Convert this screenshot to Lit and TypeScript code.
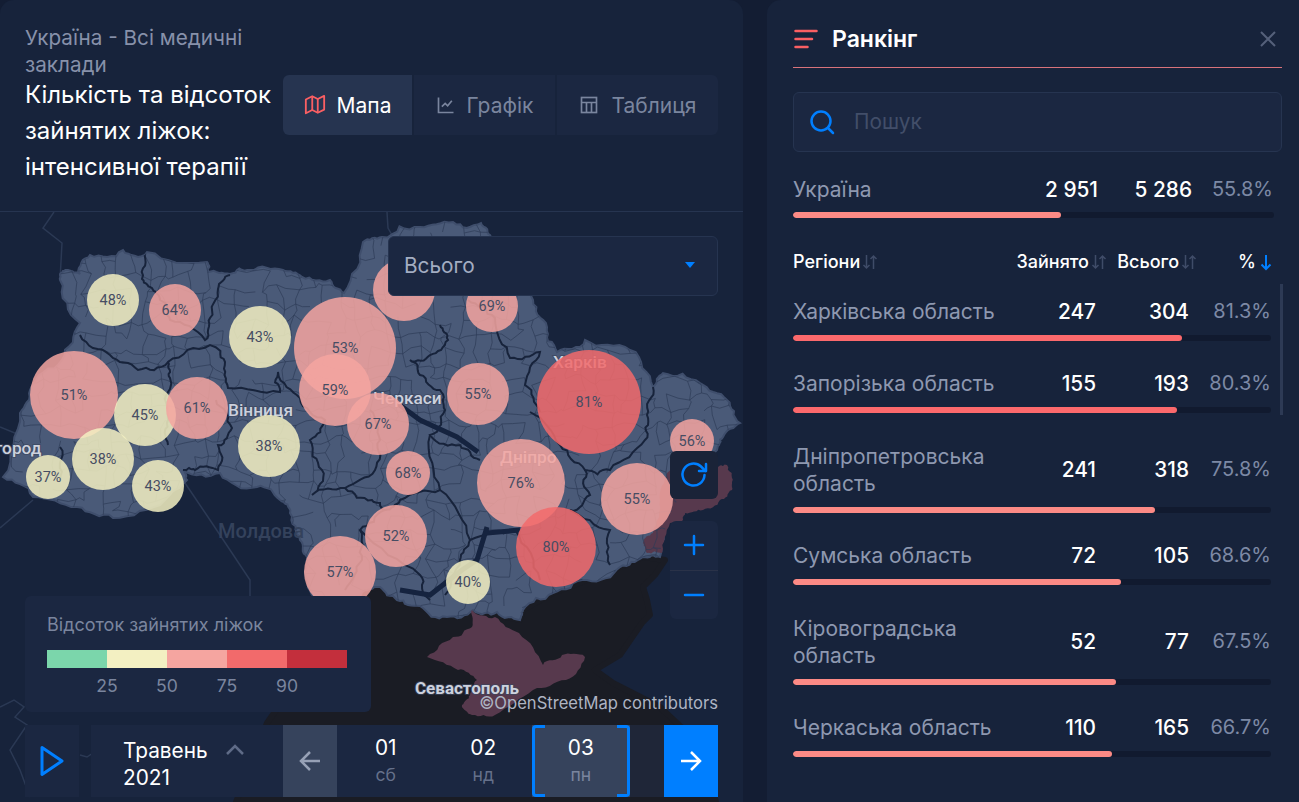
import { LitElement, html, css, svg } from 'lit';
import { customElement } from 'lit/decorators.js';

interface Bubble {
  x: number;
  y: number;
  r: number;
  pct: number;
}

interface Region {
  name: string;
  used: number;
  total: number;
  pct: string;
}

const YELLOW = 'rgba(243,240,194,.85)';
const PINK = 'rgba(245,165,160,.85)';
const RED = 'rgba(242,106,107,.85)';

const bubbles: Bubble[] = [
  { x: 404, y: 290, r: 31, pct: 70 },
  { x: 113, y: 300, r: 26, pct: 48 },
  { x: 175, y: 310, r: 26, pct: 64 },
  { x: 260, y: 337, r: 31, pct: 43 },
  { x: 345, y: 348, r: 51, pct: 53 },
  { x: 335, y: 390, r: 36, pct: 59 },
  { x: 74, y: 395, r: 44, pct: 51 },
  { x: 145, y: 415, r: 31, pct: 45 },
  { x: 197, y: 408, r: 31, pct: 61 },
  { x: 269, y: 446, r: 31, pct: 38 },
  { x: 103, y: 459, r: 31, pct: 38 },
  { x: 48, y: 477, r: 22, pct: 37 },
  { x: 158, y: 486, r: 26, pct: 43 },
  { x: 340, y: 572, r: 36, pct: 57 },
  { x: 492, y: 306, r: 26, pct: 69 },
  { x: 478, y: 394, r: 31, pct: 55 },
  { x: 589, y: 402, r: 52, pct: 81 },
  { x: 692, y: 441, r: 22, pct: 56 },
  { x: 521, y: 483, r: 44, pct: 76 },
  { x: 556, y: 547, r: 40, pct: 80 },
  { x: 637, y: 499, r: 36, pct: 55 },
  { x: 408, y: 473, r: 22, pct: 68 },
  { x: 396, y: 536, r: 31, pct: 52 },
  { x: 468, y: 582, r: 22, pct: 40 },
  { x: 378, y: 424, r: 31, pct: 67 },
];

const regions: Region[] = [
  { name: 'Харківська область', used: 247, total: 304, pct: '81.3' },
  { name: 'Запорізька область', used: 155, total: 193, pct: '80.3' },
  { name: 'Дніпропетровська область', used: 241, total: 318, pct: '75.8' },
  { name: 'Сумська область', used: 72, total: 105, pct: '68.6' },
  { name: 'Кіровоградська область', used: 52, total: 77, pct: '67.5' },
  { name: 'Черкаська область', used: 110, total: 165, pct: '66.7' },
];

const LAND_RAW =
  'M60 275 L68 270 L80 274 L90 255 L123 250 L147 252 L207 262 L208 272 L230 274 L250 270 L283 270 L302 277 L330 280 L344 293 L363 242 L382 237 L420 227 L453 222 L481 223 L491 237 L520 270 L533 300 L547 327 L557 352 L585 340 L630 350 L653 387 L663 373 L700 383 L727 400 L740 423 L723 437 L717 450 L690 470 L672 510 L660 557 L643 557 L620 567 L587 580 L553 593 L523 610 L520 620 L497 612 L473 610 L447 617 L420 606 L397 600 L380 587 L365 590 L345 612 L318 598 L305 573 L307 557 L300 540 L290 513 L280 500 L257 487 L220 473 L183 470 L187 480 L165 500 L113 518 L77 507 L33 497 L3 477 L20 413 L30 390 L62 360 L80 323 L60 280 Z';
const OCCUPIED_RAW =
  'M667 473 L690 458 L718 467 L727 465 L732 482 L732 490 L720 500 L703 510 L685 513 L683 520 L670 523 L662 553 L647 553 L643 543 L653 533 L660 500 Z';
const CRIMEA_RAW =
  'M472 610 L495 617 L519 633 L543 665 L562 655 L585 657 L566 680 L533 690 L495 715 L472 715 L462 705 L470 695 L477 680 L458 670 L427 657 L453 637 L472 627 Z';
const SEA =
  'M236 802 L267 723 L290 690 L320 640 L345 612 L365 590 L380 587 L397 600 L447 617 L473 610 L520 620 L523 610 L553 593 L587 580 L620 567 L643 557 L665 560 L655 575 L643 587 L647 600 L650 615 L642 623 L620 655 L595 670 L613 683 L660 707 L700 745 L716 802 Z';

// hand traced oblast borders, they only need to read as thick dark lines
const OBLAST_RAW = [
  'M145 252 L142 279 L153 290 L160 300 L170 320 L205 340 L210 318 L218 289 L230 275',
  'M80 335 L110 355 L138 370 L168 362 L170 378 L168 420 L168 445',
  'M60 447 L60 480 M168 362 L210 345 L225 362 L228 388 L280 392 L278 372 L300 398',
  'M216 400 L232 428 L218 445 L218 470 L195 470 L183 470',
  'M300 398 L325 420 L310 440 L322 470 L312 495 L345 488 L372 500 L385 510 L360 530 L362 560 L345 590',
  'M345 488 L375 470 L380 440 L370 410',
  'M440 325 L448 340 L430 355 L410 360 L420 375 L440 390 L445 410 L430 435 L460 445 L480 460',
  'M468 300 L495 318 L510 358 L540 352 L525 385 L540 412',
  'M530 412 L560 445 L585 470 L610 470 L645 440 L647 415 L653 387',
  'M585 470 L590 495 L570 510 L610 530 L610 565',
  'M430 435 L440 490 L470 540 L460 560 L445 595',
  'M470 540 L515 530 L540 580',
  'M385 510 L400 500 L440 490',
  'M360 530 L420 575 L430 600',
];
const RIVER = [
  'M397 403 L420 420 L457 437 L478 452',
  'M487 533 L520 530 M487 527 L477 560 L462 570 L430 595 L400 590',
];

// small seeded generator so the mesh and coastlines do not change between runs
let seed = 1297;
const rnd = () => {
  seed = (seed * 16807) % 2147483647;
  return seed / 2147483647;
};

type Pt = [number, number];

// midpoint displacement, turns straight traced edges into rough borders
function roughen(d: string, amp: number, depth = 3): string {
  return d
    .split('M')
    .filter(s => s.trim())
    .map(sub => {
      const nums = sub.match(/-?[\d.]+/g)!.map(Number);
      const pts: Pt[] = [];
      for (let i = 0; i < nums.length; i += 2) pts.push([nums[i], nums[i + 1]]);
      const closed = sub.includes('Z');
      if (closed) pts.push(pts[0]);
      let cur = pts;
      let a = amp;
      for (let k = 0; k < depth; k++) {
        const next: Pt[] = [cur[0]];
        for (let i = 1; i < cur.length; i++) {
          const p = cur[i - 1];
          const q = cur[i];
          const dx = q[0] - p[0];
          const dy = q[1] - p[1];
          const len = Math.hypot(dx, dy) || 1;
          const off = (rnd() - 0.5) * Math.min(a, len * 0.4);
          next.push([(p[0] + q[0]) / 2 - (dy / len) * off, (p[1] + q[1]) / 2 + (dx / len) * off]);
          next.push(q);
        }
        cur = next;
        a *= 0.6;
      }
      return 'M' + cur.map(p => `${p[0].toFixed(1)} ${p[1].toFixed(1)}`).join('L') + (closed ? 'Z' : '');
    })
    .join('');
}

function meshPath(): string {
  const step = 15;
  const pts: Pt[][] = [];
  for (let i = 0; i < 52; i++) {
    const col: Pt[] = [];
    for (let j = 0; j < 30; j++) {
      col.push([i * step - 4 + rnd() * 11 - 5.5, 215 + j * step + rnd() * 11 - 5.5]);
    }
    pts.push(col);
  }
  const wiggle = (a: Pt, b: Pt) => {
    const mx = (a[0] + b[0]) / 2 + rnd() * 6 - 3;
    const my = (a[1] + b[1]) / 2 + rnd() * 6 - 3;
    return `M${a[0].toFixed(1)} ${a[1].toFixed(1)}L${mx.toFixed(1)} ${my.toFixed(1)}L${b[0].toFixed(1)} ${b[1].toFixed(1)}`;
  };
  let d = '';
  for (let i = 0; i < 51; i++) {
    for (let j = 0; j < 29; j++) {
      if (rnd() > 0.3) d += wiggle(pts[i][j], pts[i + 1][j]);
      if (rnd() > 0.3) d += wiggle(pts[i][j], pts[i][j + 1]);
    }
  }
  return d;
}

const LAND = roughen(LAND_RAW, 12);
const OCCUPIED = roughen(OCCUPIED_RAW, 6);
const CRIMEA = roughen(CRIMEA_RAW, 6);
const OBLAST = OBLAST_RAW.map(d => roughen(d, 9));
const MESH = meshPath();

const sortIcon = (active = false) =>
  active
    ? html`<svg width="12" height="18" viewBox="2 0 12 18" fill="none" stroke="#007fff" stroke-width="2">
        <path d="M8 2v14M3.500 11.500 8 16l4.500-4.500" />
      </svg>`
    : html`<svg width="16" height="18" viewBox="0 0 16 18" fill="none" stroke="#3f4c68" stroke-width="1.500">
        <path d="M4.500 2v13M1.500 12l3 3 3-3M11.500 16V3M8.500 6l3-3 3 3" />
      </svg>`;

@customElement('app-root')
export class AppRoot extends LitElement {
  static styles = css`
    :host {
      display: block;
      width: 1299px;
      height: 802px;
      overflow: hidden;
      background: #131d33;
      font-family: Inter, 'Noto Sans', sans-serif;
      color: #fff;
    }

    .page {
      display: flex;
      gap: 24px;
      height: 802px;
    }

    .left {
      width: 743px;
      flex: none;
      display: flex;
      flex-direction: column;
      background: #17233b;
      border-radius: 14px 14px 0 0;
      overflow: hidden;
    }

    .head {
      height: 212px;
      box-sizing: border-box;
      flex: none;
      display: flex;
      padding: 24px 25px 0;
      border-bottom: 1px solid #263450;
    }

    .head-text {
      width: 258px;
      flex: none;
    }

    .crumb {
      font-size: 20.700px;
      line-height: 27px;
      color: #8791aa;
      width: 230px;
    }

    .title {
      font-size: 24px;
      line-height: 36px;
      margin-top: -1px;
    }

    .tabs {
      display: flex;
      gap: 2px;
      height: 60px;
      margin-top: 51px;
      width: 435px;
      border-radius: 6px;
      overflow: hidden;
    }

    .tab {
      display: flex;
      align-items: center;
      justify-content: center;
      gap: 11px;
      background: #1b2741;
      color: #7a859e;
      font-size: 21px;
    }

    .tab:nth-child(1) {
      width: 129px;
    }

    .tab:nth-child(2) {
      width: 141px;
    }

    .tab:nth-child(3) {
      width: 161px;
      gap: 13px;
    }

    .tab.on {
      background: #263450;
      color: #fff;
    }

    .map {
      position: relative;
      flex: 1;
      overflow: hidden;
    }

    .map > svg {
      display: block;
    }

    .city {
      font-family: Roboto, sans-serif;
      font-size: 17.300px;
      font-weight: 500;
      fill: #ccd1dd;
      paint-order: stroke;
      stroke: rgba(60, 70, 95, 0.7);
      stroke-width: 2px;
    }

    .city.capital {
      font-size: 17px;
      font-weight: 700;
    }

    .country {
      font-family: Roboto, sans-serif;
      font-size: 20px;
      font-weight: 500;
      fill: #34425c;
    }

    .bubble-label {
      font-family: Roboto, sans-serif;
      font-size: 14.500px;
      font-weight: 400;
      fill: #474d63;
      text-anchor: middle;
      dominant-baseline: central;
    }

    .select {
      position: absolute;
      left: 388px;
      top: 24px;
      width: 330px;
      height: 60px;
      box-sizing: border-box;
      display: flex;
      align-items: center;
      justify-content: space-between;
      padding: 0 22px 2px 15px;
      background: #1b2741;
      border: 1px solid #263450;
      border-radius: 6px;
      font-size: 20.800px;
      color: #a3adc2;
    }

    .caret {
      width: 0;
      height: 0;
      border: 5px solid transparent;
      border-top: 6px solid #007fff;
      border-bottom: 0;
    }

    .ctrl {
      position: absolute;
      left: 670px;
      width: 48px;
      background: #1b2741;
      border-radius: 6px;
    }

    .ctrl.reload {
      top: 239px;
      height: 48px;
      background: #1a2338;
      display: flex;
      align-items: center;
      justify-content: center;
    }

    .ctrl.zoom {
      top: 309px;
      height: 98px;
      display: flex;
      flex-direction: column;
    }

    .ctrl.zoom div {
      flex: 1;
      display: flex;
      align-items: center;
      justify-content: center;
    }

    .ctrl.zoom div + div {
      border-top: 1px solid #2a3248;
    }

    .legend {
      position: absolute;
      left: 25px;
      top: 384px;
      width: 346px;
      height: 116px;
      box-sizing: border-box;
      padding: 19px 22px;
      background: #1b2741;
      border-radius: 6px;
      color: #7a859e;
      font-size: 17.600px;
    }

    .legend-title {
      font-size: 18px;
      line-height: 20px;
    }

    .scale {
      display: flex;
      width: 300px;
      height: 18px;
      margin-top: 15px;
    }

    .scale i {
      flex: 1;
    }

    .ticks {
      display: flex;
      justify-content: space-between;
      width: 180px;
      margin: 8px 0 0 60px;
      line-height: 20px;
    }

    .ticks span {
      width: 0;
      display: flex;
      justify-content: center;
    }

    .attr {
      position: absolute;
      right: 25px;
      top: 481px;
      font-size: 16.600px;
      line-height: 20px;
      color: #aeb4c3;
    }

    .time {
      position: absolute;
      left: 25px;
      top: 513px;
      width: 693px;
      height: 72px;
      display: flex;
    }

    .play {
      width: 54px;
      margin-right: 12px;
      background: #1b2741;
      display: flex;
      align-items: center;
      justify-content: center;
    }

    .month {
      width: 192px;
      box-sizing: border-box;
      padding: 12px 0 0 32px;
      background: #1b2741;
      display: flex;
      gap: 15px;
      font-size: 20.800px;
      line-height: 27px;
    }

    .month-name {
      width: 87px;
    }

    .chev {
      margin-top: 6px;
    }

    .arrow {
      width: 54px;
      display: flex;
      align-items: center;
      justify-content: center;
      flex: none;
      background: #36435c;
    }

    .arrow.next {
      background: #007fff;
    }

    .days {
      flex: 1;
      display: flex;
      background: #1f2638;
    }

    .day {
      position: relative;
      width: 97.500px;
      background: #1b2741;
      display: flex;
      flex-direction: column;
      align-items: center;
      padding-top: 11px;
      box-sizing: border-box;
      font-size: 20.800px;
      line-height: 24px;
    }

    .day small {
      font-size: 17.600px;
      line-height: 20px;
      margin-top: 5px;
      color: #65708a;
    }

    .day.on {
      background: #36435c;
    }

    .day.on small {
      color: #7a859e;
    }

    .day.on::before,
    .day.on::after {
      content: '';
      position: absolute;
      top: 0;
      bottom: 0;
      width: 10px;
      border: 3px solid #007fff;
    }

    .day.on::before {
      left: 0;
      border-right: 0;
      border-radius: 4px 0 0 4px;
    }

    .day.on::after {
      right: 0;
      border-left: 0;
      border-radius: 0 4px 4px 0;
    }

    .right {
      flex: 1;
      box-sizing: border-box;
      padding: 0 17px 0 26px;
      background: #17233b;
      border-radius: 14px 0 0 0;
    }

    .rank-head {
      height: 68px;
      box-sizing: border-box;
      display: flex;
      align-items: center;
      padding: 10px 5px 0 1px;
      border-bottom: 1px solid #d9737b;
      font-size: 23px;
      font-weight: 600;
    }

    .rank-head span {
      flex: 1;
      margin-left: 14px;
    }

    .search {
      height: 60px;
      box-sizing: border-box;
      margin-top: 24px;
      display: flex;
      align-items: center;
      gap: 19px;
      padding: 0 0 1px 15px;
      background: #1b2741;
      border: 1px solid #263450;
      border-radius: 6px;
      font-size: 20.800px;
      color: #424e69;
    }

    .total {
      display: grid;
      grid-template-columns: 205px 100px 94px 81px;
      width: 480px;
      margin-top: 24px;
      font-size: 20.800px;
      line-height: 27px;
    }

    .total .name,
    .row .name {
      color: #8e98b0;
      font-size: 21px;
    }

    .num {
      text-align: right;
      font-weight: 500;
    }

    .pct {
      text-align: right;
      font-size: 20px;
      color: #7d89a5;
    }

    .track {
      height: 6px;
      border-radius: 3px;
      background: #111a2f;
      overflow: hidden;
    }

    .track i {
      display: block;
      height: 100%;
      border-radius: 3px;
      background: #fc8a85;
    }

    .track i.hot {
      background: #fb696c;
    }

    .total-bar {
      width: 481px;
      margin-top: 9px;
    }

    .thead {
      display: grid;
      grid-template-columns: 214px 100px 90px 75px;
      width: 479px;
      margin-top: 34px;
      font-size: 18px;
      font-weight: 500;
      line-height: 20px;
    }

    .thead div {
      display: flex;
      align-items: center;
      justify-content: flex-end;
      gap: 2px;
    }

    .thead div:last-child {
      gap: 4px;
    }

    .thead div:first-child {
      justify-content: flex-start;
    }

    .list {
      position: relative;
      margin-top: 26px;
    }

    .thumb {
      position: absolute;
      left: 487px;
      top: -14px;
      width: 3px;
      height: 131px;
      background: #2d3a55;
    }

    .row {
      width: 478px;
      margin-bottom: 29.400px;
    }

    .cells {
      display: grid;
      grid-template-columns: 230px 73px 93px 82px;
      align-items: center;
      font-size: 20.800px;
      line-height: 27px;
    }

    .row .track {
      margin-top: 10px;
    }
  `;

  private renderMap() {
    return html`<svg width="743" height="590" viewBox="0 212 743 590" xmlns="http://www.w3.org/2000/svg">
      <defs>
        <clipPath id="land"><path d=${LAND} /></clipPath>
      </defs>
      <g fill="none" stroke="#2b3954" stroke-width="1.500">
        <path d="M54 212 L43 228 L62 243 L60 280" />
        <path d="M387 212 L388 228 L396 242" />
        <path d="M185 483 L210 520 L250 580 L250 597" />
        <path d="M0 427 L27 438 M33 500 L0 528" />
        <path d="M0 707 L14 700 L24 707 L15 717 L27 725 L10 750 L20 770 L30 797 M80 755 L87 757 L93 753" />
      </g>
      <path d=${SEA} fill="#1a1c24" stroke="#1a1c24" stroke-width="6" stroke-linejoin="round" />
      <path d=${LAND} fill="#4a5a78" stroke="#3f4e6c" stroke-width="2" />
      <path d=${CRIMEA} fill="#57394d" />
      <path d=${OCCUPIED} fill="#57394d" />
      <g clip-path="url(#land)" fill="none">
        <path d=${MESH} stroke="#2e3c58" stroke-width=".7" />
        ${OBLAST.map(d => svg`<path d=${d} stroke="#17233b" stroke-width="2" />`)}
        ${RIVER.map(d => svg`<path d=${d} stroke="#15233f" stroke-width="5" />`)}
      </g>
      <text class="city" x="228" y="416">Вінниця</text>
      <text class="city" x="373" y="404">Черкаси</text>
      <text class="city" x="553" y="368">Харків</text>
      <text class="city" x="500" y="463">Дніпро</text>
      <text class="city" x="-5" y="454">город</text>
      <text class="country" x="218" y="538">Молдова</text>
      <text class="city capital" x="415" y="694">Севастополь</text>
      ${bubbles.map(b => {
        const fill = b.pct < 50 ? YELLOW : b.pct < 78 ? PINK : RED;
        return svg`<circle cx=${b.x} cy=${b.y} r=${b.r} fill=${fill} />
          <text class="bubble-label" x=${b.x} y=${b.y}>${b.pct}%</text>`;
      })}
    </svg>`;
  }

  render() {
    return html`<div class="page">
      <section class="left">
        <header class="head">
          <div class="head-text">
            <div class="crumb">Україна - Всі медичні заклади</div>
            <div class="title">Кількість та відсоток зайнятих ліжок: інтенсивної терапії</div>
          </div>
          <nav class="tabs">
            <div class="tab on">
              <svg width="22" height="22" viewBox="0 0 24 24" fill="none" stroke="#fa5f63" stroke-width="2" stroke-linejoin="round">
                <path d="M2 6v15l7-3.500 6 3 7-3.500V2l-7 3.500-6-3z" />
                <path d="M9 2.500v15M15 5.500v15" />
              </svg>
              Мапа
            </div>
            <div class="tab">
              <svg width="20" height="20" viewBox="0 0 24 24" fill="none" stroke="#7a859e" stroke-width="2">
                <path d="M3 3v18h18" />
                <path d="M7 14l4-4 3 3 5-6" />
              </svg>
              Графік
            </div>
            <div class="tab">
              <svg width="20" height="20" viewBox="0 0 24 24" fill="none" stroke="#7a859e" stroke-width="2">
                <rect x="3" y="3" width="18" height="18" />
                <path d="M3 9h18M9 9v12M15 9v12" />
              </svg>
              Таблиця
            </div>
          </nav>
        </header>
        <div class="map">
          ${this.renderMap()}
          <div class="select">Всього <span class="caret"></span></div>
          <div class="ctrl reload">
            <svg width="30" height="30" viewBox="0 0 30 30" fill="none" stroke="#007fff" stroke-width="2.500" stroke-linecap="round" stroke-linejoin="round">
              <path d="M25.500 15A11 11 0 1 1 22 6.500L26.500 11" />
              <path d="M27 4v7h-7" />
            </svg>
          </div>
          <div class="ctrl zoom">
            <div>
              <svg width="22" height="22" viewBox="0 0 22 22" stroke="#007fff" stroke-width="2.500" stroke-linecap="round">
                <path d="M11 2v18M2 11h18" />
              </svg>
            </div>
            <div>
              <svg width="22" height="22" viewBox="0 0 22 22" stroke="#007fff" stroke-width="2.500" stroke-linecap="round">
                <path d="M2 11h18" />
              </svg>
            </div>
          </div>
          <div class="legend">
            <div class="legend-title">Відсоток зайнятих ліжок</div>
            <div class="scale">
              ${['#7bd6ab', '#f3f0c2', '#f5a5a0', '#f26a6b', '#c32f3c'].map(c => html`<i style="background:${c}"></i>`)}
            </div>
            <div class="ticks">
              ${[25, 50, 75, 90].map(t => html`<span>${t}</span>`)}
            </div>
          </div>
          <div class="attr">©OpenStreetMap contributors</div>
          <div class="time">
            <div class="play">
              <svg width="26" height="32" viewBox="0 0 26 32" fill="none" stroke="#007fff" stroke-width="3" stroke-linejoin="round">
                <path d="M3 2.500 23 16 3 29.500z" />
              </svg>
            </div>
            <div class="month">
              <div class="month-name">Травень 2021</div>
              <svg class="chev" width="20" height="14" viewBox="0 0 20 14" fill="none" stroke="#5f6b87" stroke-width="2.500">
                <path d="M2 11l8-8 8 8" />
              </svg>
            </div>
            <div class="arrow">
              <svg width="24" height="24" viewBox="0 0 24 24" fill="none" stroke="#97a1b6" stroke-width="2.500">
                <path d="M22 12H3M12 3l-9 9 9 9" />
              </svg>
            </div>
            <div class="days">
              <div class="day">01<small>сб</small></div>
              <div class="day">02<small>нд</small></div>
              <div class="day on">03<small>пн</small></div>
            </div>
            <div class="arrow next">
              <svg width="24" height="24" viewBox="0 0 24 24" fill="none" stroke="#fff" stroke-width="2.500">
                <path d="M2 12h19M12 3l9 9-9 9" />
              </svg>
            </div>
          </div>
        </div>
      </section>
      <aside class="right">
        <div class="rank-head">
          <svg width="24" height="20" viewBox="0 0 24 20" stroke="#fa5f63" stroke-width="2.500" stroke-linecap="round">
            <path d="M1.500 2h21M1.500 10h16.500M1.500 18h12" />
          </svg>
          <span>Ранкінг</span>
          <svg width="18" height="18" viewBox="0 0 18 18" stroke="#55607a" stroke-width="2">
            <path d="M2 2l14 14M16 2 2 16" />
          </svg>
        </div>
        <div class="search">
          <svg width="26" height="26" viewBox="0 0 26 26" fill="none" stroke="#007fff" stroke-width="2.500" stroke-linecap="round">
            <circle cx="12" cy="12" r="9.500" />
            <path d="M19.500 19.500 24 24" />
          </svg>
          Пошук
        </div>
        <div class="total">
          <div class="name">Україна</div>
          <div class="num">2 951</div>
          <div class="num">5 286</div>
          <div class="pct">55.8%</div>
        </div>
        <div class="track total-bar"><i style="width:55.800%"></i></div>
        <div class="thead">
          <div>Регіони ${sortIcon()}</div>
          <div>Зайнято ${sortIcon()}</div>
          <div>Всього ${sortIcon()}</div>
          <div>% ${sortIcon(true)}</div>
        </div>
        <div class="list">
          <div class="thumb"></div>
          ${regions.map(
            r => html`<div class="row">
              <div class="cells">
                <div class="name">${r.name}</div>
                <div class="num">${r.used}</div>
                <div class="num">${r.total}</div>
                <div class="pct">${r.pct}%</div>
              </div>
              <div class="track">
                <i class=${parseFloat(r.pct) > 80 ? 'hot' : ''} style="width:${r.pct}%"></i>
              </div>
            </div>`,
          )}
        </div>
      </aside>
    </div>`;
  }
}
